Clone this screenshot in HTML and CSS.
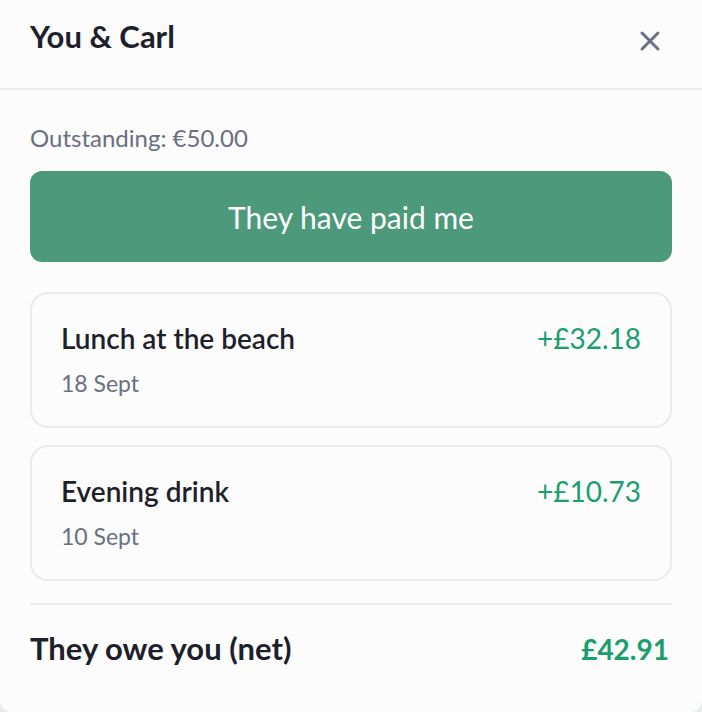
FILE: index.html
```html
<!DOCTYPE html>
<html lang="en">
<head>
  <meta charset="UTF-8" />
  <meta name="viewport" content="width=device-width, initial-scale=1" />
  <title>You &amp; Carl</title>
  <link rel="stylesheet" href="styles.css">
</head>
<body>
  <div class="panel">
    <div class="panel-header">
      <h2>You &amp; Carl</h2>
      <button class="close-btn" aria-label="Close">
        <svg width="22" height="22" viewBox="0 0 22 22">
          <path d="M3 3 L19 19 M19 3 L3 19" stroke="#6b6f80" stroke-width="3" stroke-linecap="round" />
        </svg>
      </button>
    </div>

    <div class="panel-body">
      <div class="outstanding">Outstanding: €50.00</div>
      <button class="paid-btn">They have paid me</button>

      <div class="items">
        <div class="item">
          <div class="item-info">
            <div class="item-title">Lunch at the beach</div>
            <div class="item-date">18 Sept</div>
          </div>
          <div class="item-amount">+£32.18</div>
        </div>

        <div class="item">
          <div class="item-info">
            <div class="item-title">Evening drink</div>
            <div class="item-date">10 Sept</div>
          </div>
          <div class="item-amount">+£10.73</div>
        </div>
      </div>

      <div class="net">
        <span>They owe you (net)</span>
        <span class="net-amount">£42.91</span>
      </div>
    </div>
  </div>
</body>
</html>
```

FILE: styles.css
```css
body {
  margin: 0;
  font-family: Lato, "Noto Sans", sans-serif;
  background: #e9eaec;
  color: #1f1f2c;
}
.panel {
  width: 702px;
  height: 712px;
  background: #fbfcfb;
  border-radius: 0 0 12px 12px;
  overflow: hidden;
}
.panel-header {
  height: 90px;
  padding: 0 30px;
  display: flex;
  align-items: center;
  justify-content: space-between;
  border-bottom: 2px solid #ebebf0;
  box-sizing: border-box;
}
.panel-header h2 {
  margin: 0 0 17px;
  font-size: 31px;
  font-weight: 700;
  color: #1f1f2c;
}
.close-btn {
  background: none;
  border: none;
  padding: 0;
  margin-right: 11px;
  margin-bottom: 6px;
  cursor: pointer;
  display: flex;
}
.panel-body {
  padding: 33px 30px 0;
}
.outstanding {
  font-size: 24px;
  line-height: 29px;
  color: #6b6f80;
  margin-bottom: 19px;
}
.paid-btn {
  display: block;
  width: 100%;
  height: 91px;
  background: #4c9a7b;
  color: white;
  font-family: inherit;
  font-size: 30px;
  border: none;
  border-radius: 12px;
  cursor: pointer;
  margin-bottom: 30px;
}
.items {
  display: flex;
  flex-direction: column;
  gap: 17px;
}
.item {
  display: flex;
  justify-content: space-between;
  align-items: flex-start;
  border: 2px solid #eaeaef;
  border-radius: 18px;
  padding: 27px 29px;
  height: 136px;
  box-sizing: border-box;
}
.item-title {
  font-size: 28px;
  line-height: 34px;
  font-weight: 600;
  color: #1f1f2c;
}
.item-date {
  font-size: 23px;
  line-height: 28px;
  color: #6b6f80;
  margin-top: 14px;
}
.item-amount {
  font-size: 28px;
  line-height: 34px;
  color: #1a9e6e;
}
.net {
  border-top: 2px solid #eaeaef;
  margin-top: 22px;
  padding-top: 25px;
  display: flex;
  justify-content: space-between;
  align-items: baseline;
  font-size: 31px;
  line-height: 36px;
  font-weight: 700;
}
.net-amount {
  color: #1a9e6e;
  font-size: 28px;
  margin-right: 3px;
}
```
